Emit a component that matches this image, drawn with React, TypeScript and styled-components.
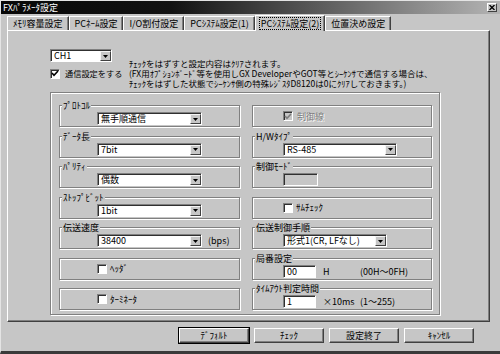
import React from 'react';
import styled, { createGlobalStyle } from 'styled-components';

const BG = '#c6c6c6';
const FONT = `"Noto Sans CJK JP", "Noto Sans", sans-serif`;

const Global = createGlobalStyle`
  html, body { margin: 0; padding: 0; background: ${BG}; }
  body { width: 500px; height: 354px; overflow: hidden; font-family: ${FONT}; font-size: 9px; color: #000; }
  * { box-sizing: border-box; }
`;

const Window = styled.div`
  width: 500px;
  height: 354px;
  display: flex;
  flex-direction: column;
  background: ${BG};
  border-top: 1px solid #e4e4e4;
  border-left: 1px solid #e4e4e4;
  border-bottom: 3px solid #3a3a3a;
`;

const TitleBar = styled.div`
  height: 13px;
  flex: 0 0 13px;
  display: flex;
  align-items: center;
  justify-content: space-between;
  padding: 0 3px 0 2px;
  background: linear-gradient(to right, #080808 0%, #121212 34%, #b4b4b4 100%);
  color: #fff;
  font-size: 9px;
  line-height: 13px;
  white-space: nowrap;
`;

const CloseButton = styled.div`
  width: 10px;
  height: 9px;
  background: ${BG};
  border: 1px solid;
  border-color: #fff #404040 #404040 #fff;
  display: flex;
  align-items: center;
  justify-content: center;
`;

const Body = styled.div`
  display: flex;
  flex-direction: column;
  padding: 1px 10px 0 6px;
`;

const TabStrip = styled.div`
  display: flex;
  align-items: flex-end;
  height: 15px;
  position: relative;
  z-index: 1;
`;

const Tab = styled.div<{ $active?: boolean }>`
  height: ${p => (p.$active ? 16 : 14)}px;
  margin-bottom: ${p => (p.$active ? -1 : 0)}px;
  padding: ${p => (p.$active ? 1 : 0)}px 3px 0;
  background: ${BG};
  border-top: 1px solid #fff;
  border-left: 1px solid #fff;
  border-right: 1px solid #404040;
  box-shadow: inset -1px 0 0 #808080;
  display: flex;
  align-items: ${p => (p.$active ? 'flex-start' : 'center')};
  white-space: nowrap;
  font-size: 9px;
  line-height: 11px;
`;

const TabLabel = styled.span<{ $focus?: boolean }>`
  padding: 0 1px;
  border: 1px dotted ${p => (p.$focus ? '#000' : 'transparent')};
`;

const Panel = styled.div`
  height: 292px;
  border: 1px solid;
  border-color: #fff #404040 #404040 #fff;
  box-shadow: inset -1px -1px 0 #808080;
  padding: 18px 0 0 42px;
  display: flex;
  flex-direction: column;
`;

const Header = styled.div`
  height: 43px;
  display: grid;
  grid-template-columns: 79px auto;
`;

const HeaderLeft = styled.div`
  display: flex;
  flex-direction: column;
  align-items: flex-start;
  gap: 6px;
`;

const Note = styled.div`
  padding-top: 9px;
  display: flex;
  flex-direction: column;
`;

const NoteLine = styled.div`
  height: 10px;
  font-size: 8.5px;
  line-height: 10px;
  white-space: nowrap;
`;

const BigBox = styled.div`
  width: 390px;
  height: 223px;
  border: 1px solid #808080;
  box-shadow: inset 1px 1px 0 #fff, 1px 1px 0 #fff;
  padding: 12px 7px 0 8px;
  display: grid;
  grid-template-columns: 181px 180px;
  grid-auto-rows: 22px;
  row-gap: 8.5px;
  column-gap: 12px;
`;

const Group = styled.div<{ $indent: number; $plain?: boolean }>`
  position: relative;
  height: 22px;
  border: 1px solid #808080;
  box-shadow: inset 1px 1px 0 #fff, 1px 1px 0 #fff;
  display: flex;
  align-items: ${p => (p.$plain ? 'center' : 'flex-start')};
  padding: ${p => (p.$plain ? 0 : 6)}px 0 0 ${p => p.$indent}px;
`;

const Legend = styled.span`
  position: absolute;
  top: -6px;
  left: 2px;
  padding: 0 1px;
  background: ${BG};
  font-size: 9px;
  line-height: 11px;
  white-space: nowrap;
`;

const SelectBox = styled.div<{ $w: number }>`
  width: ${p => p.$w}px;
  height: 13px;
  flex: 0 0 auto;
  background: #fff;
  display: flex;
  align-items: stretch;
  border: 1px solid;
  border-color: #808080 #fff #fff #808080;
  box-shadow: inset 1px 1px 0 #303030;
  padding: 1px 0 0 1px;
`;

const SelectText = styled.span`
  flex: 1;
  padding-left: 2px;
  font-size: 9px;
  line-height: 10px;
  white-space: nowrap;
`;

const ArrowButton = styled.span`
  width: 11px;
  flex: 0 0 11px;
  background: ${BG};
  border: 1px solid;
  border-color: #f4f4f4 #404040 #404040 #f4f4f4;
  display: flex;
  align-items: center;
  justify-content: center;
`;

const TextBox = styled.div<{ $disabled?: boolean }>`
  width: ${p => (p.$disabled ? 35 : 33)}px;
  height: 13px;
  flex: 0 0 auto;
  background: ${p => (p.$disabled ? BG : '#fff')};
  border: 1px solid;
  border-color: #808080 #fff #fff #808080;
  box-shadow: inset 1px 1px 0 #303030;
  padding: 1px 0 0 3px;
  font-size: 9px;
  line-height: 10px;
`;

const CheckRow = styled.div<{ $gap?: number }>`
  display: flex;
  align-items: center;
  gap: ${p => p.$gap ?? 4}px;
  white-space: nowrap;
`;

const CheckBox = styled.span<{ $disabled?: boolean }>`
  width: 10px;
  height: 10px;
  flex: 0 0 10px;
  background: ${p => (p.$disabled ? BG : '#fff')};
  border: 1px solid;
  border-color: #808080 #fff #fff #808080;
  box-shadow: inset 1px 1px 0 #303030;
  display: flex;
  align-items: center;
  justify-content: center;
`;

const Label = styled.span<{ $disabled?: boolean; $size?: number }>`
  font-size: ${p => p.$size ?? 9}px;
  line-height: 11px;
  color: ${p => (p.$disabled ? '#7c7c7c' : '#000')};
  text-shadow: ${p => (p.$disabled ? '1px 1px 0 #fff' : 'none')};
`;

const Unit = styled.span<{ $w?: number; $ml?: number }>`
  margin-left: ${p => p.$ml ?? 7}px;
  width: ${p => (p.$w ? `${p.$w}px` : 'auto')};
  font-size: 9px;
  line-height: 13px;
  white-space: nowrap;
`;

const ButtonRow = styled.div`
  display: flex;
  justify-content: flex-end;
  gap: 5px;
  padding: 6px 16px 0 0;
`;

const Button = styled.div<{ $default?: boolean }>`
  width: 70px;
  height: 15px;
  background: ${BG};
  border: 1px solid;
  border-color: #fff #404040 #404040 #fff;
  box-shadow: ${p => (p.$default ? '0 0 0 1px #000, ' : '')}inset -1px -1px 0 #808080;
  display: flex;
  align-items: center;
  justify-content: center;
  font-size: 9px;
  line-height: 13px;
  white-space: nowrap;
`;

const Check = ({ color = '#000' }: { color?: string }) => (
  <svg width="8" height="7" viewBox="0 0 8 7">
    <path d="M1 3 L3 5.3 L7 1" fill="none" stroke={color} strokeWidth="1.6" />
  </svg>
);

const Arrow = () => (
  <svg width="5" height="3" viewBox="0 0 5 3">
    <path d="M0 0 H5 L2.5 3 Z" fill="#000" />
  </svg>
);

const Select = ({ w, value }: { w: number; value: string }) => (
  <SelectBox $w={w}>
    <SelectText>{value}</SelectText>
    <ArrowButton>
      <Arrow />
    </ArrowButton>
  </SelectBox>
);

const tabs = ['ﾒﾓﾘ容量設定', 'PCﾈｰﾑ設定', 'I/O割付設定', 'PCｼｽﾃﾑ設定(1)', 'PCｼｽﾃﾑ設定(2)', '位置決め設定'];
const ACTIVE = 4;

const noteLines = [
  'ﾁｪｯｸをはずすと設定内容はｸﾘｱされます。',
  '(FX用ｵﾌﾟｼｮﾝﾎﾞｰﾄﾞ等を使用しGX DeveloperやGOT等とｼｰｹﾝｻで通信する場合は、',
  'ﾁｪｯｸをはずした状態でｼｰｹﾝｻ側の特殊ﾚｼﾞｽﾀD8120は0にｸﾘｱしておきます。)',
];

const L = 37;
const R = 30;

export default function App() {
  return (
    <>
      <Global />
      <Window>
        <TitleBar>
          <span>FXﾊﾟﾗﾒｰﾀ設定</span>
          <CloseButton>
            <svg width="6" height="5" viewBox="0 0 6 5">
              <path d="M0.5 0 L5.5 5 M5.5 0 L0.5 5" stroke="#000" strokeWidth="1.3" />
            </svg>
          </CloseButton>
        </TitleBar>
        <Body>
          <TabStrip>
            {tabs.map((t, i) => (
              <Tab key={t} $active={i === ACTIVE}>
                <TabLabel $focus={i === ACTIVE}>{t}</TabLabel>
              </Tab>
            ))}
          </TabStrip>
          <Panel>
            <Header>
              <HeaderLeft>
                <Select w={62} value="CH1" />
                <CheckRow $gap={5}>
                  <CheckBox>
                    <Check />
                  </CheckBox>
                  <Label $size={8.2}>通信設定をする</Label>
                </CheckRow>
              </HeaderLeft>
              <Note>
                {noteLines.map(l => (
                  <NoteLine key={l}>{l}</NoteLine>
                ))}
              </Note>
            </Header>
            <BigBox>
              <Group $indent={L}>
                <Legend>ﾌﾟﾛﾄｺﾙ</Legend>
                <Select w={105} value="無手順通信" />
              </Group>
              <Group $indent={R} $plain>
                <CheckRow>
                  <CheckBox $disabled>
                    <Check color="#7c7c7c" />
                  </CheckBox>
                  <Label $disabled>制御線</Label>
                </CheckRow>
              </Group>

              <Group $indent={L}>
                <Legend>ﾃﾞｰﾀ長</Legend>
                <Select w={105} value="7bit" />
              </Group>
              <Group $indent={R}>
                <Legend>H/Wﾀｲﾌﾟ</Legend>
                <Select w={114} value="RS-485" />
              </Group>

              <Group $indent={L}>
                <Legend>ﾊﾟﾘﾃｨ</Legend>
                <Select w={105} value="偶数" />
              </Group>
              <Group $indent={R}>
                <Legend>制御ﾓｰﾄﾞ</Legend>
                <TextBox $disabled />
              </Group>

              <Group $indent={L}>
                <Legend>ｽﾄｯﾌﾟﾋﾞｯﾄ</Legend>
                <Select w={105} value="1bit" />
              </Group>
              <Group $indent={R} $plain>
                <CheckRow $gap={3}>
                  <CheckBox />
                  <Label>ｻﾑﾁｪｯｸ</Label>
                </CheckRow>
              </Group>

              <Group $indent={L}>
                <Legend>伝送速度</Legend>
                <Select w={105} value="38400" />
                <Unit $ml={6}>(bps)</Unit>
              </Group>
              <Group $indent={R}>
                <Legend>伝送制御手順</Legend>
                <Select w={104} value="形式1(CR, LFなし)" />
              </Group>

              <Group $indent={L} $plain>
                <CheckRow $gap={3}>
                  <CheckBox />
                  <Label>ﾍｯﾀﾞ</Label>
                </CheckRow>
              </Group>
              <Group $indent={R}>
                <Legend>局番設定</Legend>
                <TextBox>00</TextBox>
                <Unit $w={37}>H</Unit>
                <Unit $ml={0}>(00H～0FH)</Unit>
              </Group>

              <Group $indent={L} $plain>
                <CheckRow $gap={3}>
                  <CheckBox />
                  <Label>ﾀｰﾐﾈｰﾀ</Label>
                </CheckRow>
              </Group>
              <Group $indent={R}>
                <Legend>ﾀｲﾑｱｳﾄ判定時間</Legend>
                <TextBox>1</TextBox>
                <Unit $w={37}>×10ms</Unit>
                <Unit $ml={0}>(1～255)</Unit>
              </Group>
            </BigBox>
          </Panel>
          <ButtonRow>
            <Button $default>ﾃﾞﾌｫﾙﾄ</Button>
            <Button>ﾁｪｯｸ</Button>
            <Button>設定終了</Button>
            <Button>ｷｬﾝｾﾙ</Button>
          </ButtonRow>
        </Body>
      </Window>
    </>
  );
}
